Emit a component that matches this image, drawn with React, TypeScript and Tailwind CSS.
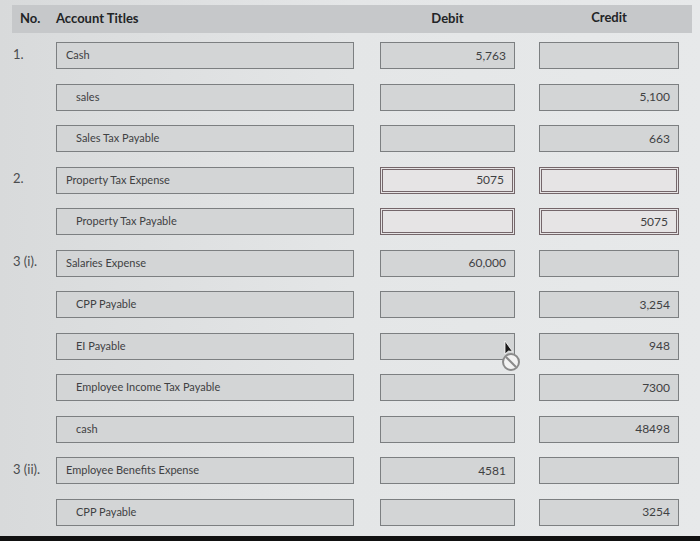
import React from "react";

type Row = {
  no?: string;
  account: string;
  indent?: boolean;
  debit?: string;
  credit?: string;
  error?: boolean;
};

const rows: Row[] = [
  { no: "1.", account: "Cash", debit: "5,763" },
  { account: "sales", indent: true, credit: "5,100" },
  { account: "Sales Tax Payable", indent: true, credit: "663" },
  { no: "2.", account: "Property Tax Expense", debit: "5075", error: true },
  { account: "Property Tax Payable", indent: true, credit: "5075", error: true },
  { no: "3 (i).", account: "Salaries Expense", debit: "60,000" },
  { account: "CPP Payable", indent: true, credit: "3,254" },
  { account: "EI Payable", indent: true, credit: "948" },
  { account: "Employee Income Tax Payable", indent: true, credit: "7300" },
  { account: "cash", indent: true, credit: "48498" },
  { no: "3 (ii).", account: "Employee Benefits Expense", debit: "4581" },
  { account: "CPP Payable", indent: true, credit: "3254" },
];

function Field({
  value,
  align = "right",
  indent,
  error,
  className,
}: {
  value?: string;
  align?: "left" | "right";
  indent?: boolean;
  error?: boolean;
  className: string;
}) {
  return (
    <div
      className={`${className} h-[27px] flex items-center text-[#3f4143] ${
        error
          ? "border-[3px] border-double border-[#74666a] bg-[#e6e4e5]"
          : "border border-[#7c7f81] bg-[#d3d5d6]"
      } ${
        align === "right"
          ? "justify-end pr-2 text-[12px]"
          : indent
            ? "pl-[19px] text-[11px]"
            : "pl-[9px] text-[11px]"
      }`}
    >
      {value}
    </div>
  );
}

export default function App() {
  return (
    <div
      className="w-[700px] h-[541px] flex flex-col bg-gradient-to-r from-[#d8dadb] via-[#e4e6e7] to-[#e7e9ea] overflow-hidden"
      style={{ fontFamily: "Lato, 'Open Sans', sans-serif" }}
    >
      <div className="relative flex-1">
        <div className="mt-[5px] ml-[12px] w-[680px] h-[28px] bg-[#c6c8ca] flex items-center text-[13px] font-bold text-[#222426]">
          <div className="w-[44px] pl-2">No.</div>
          <div className="w-[298px]">Account Titles</div>
          <div className="w-[26px]" />
          <div className="w-[135px] text-center">Debit</div>
          <div className="w-[24px]" />
          <div className="w-[140px] text-center -mt-[2px]">Credit</div>
        </div>

        <div className="mt-[9px] flex flex-col gap-[14.5px]">
          {rows.map((r, i) => (
            <div key={i} className="flex items-center">
              <div className="w-[56px] pl-[13px] text-[13px] text-[#4b4d4f] -mt-[2px]">
                {r.no}
              </div>
              <Field
                className="w-[298px]"
                value={r.account}
                align="left"
                indent={r.indent}
              />
              <div className="w-[26px]" />
              <Field className="w-[135px]" value={r.debit} error={r.error} />
              <div className="w-[24px]" />
              <Field className="w-[140px]" value={r.credit} error={r.error} />
            </div>
          ))}
        </div>

        <svg
          className="absolute left-[499px] top-[339px]"
          width="24"
          height="34"
          viewBox="0 0 24 34"
        >
          <path d="M6 2 L6 15 L9.5 12 L13.5 12.5 Z" fill="#1a1a1a" stroke="#fff" strokeWidth="0.8" />
          <circle cx="12" cy="23" r="8" fill="#f2f2f2" stroke="#8a8a8a" strokeWidth="2" />
          <line x1="7" y1="18" x2="17" y2="28" stroke="#8a8a8a" strokeWidth="2" />
        </svg>
      </div>
      <div className="h-[5px] bg-[#111]" />
    </div>
  );
}
